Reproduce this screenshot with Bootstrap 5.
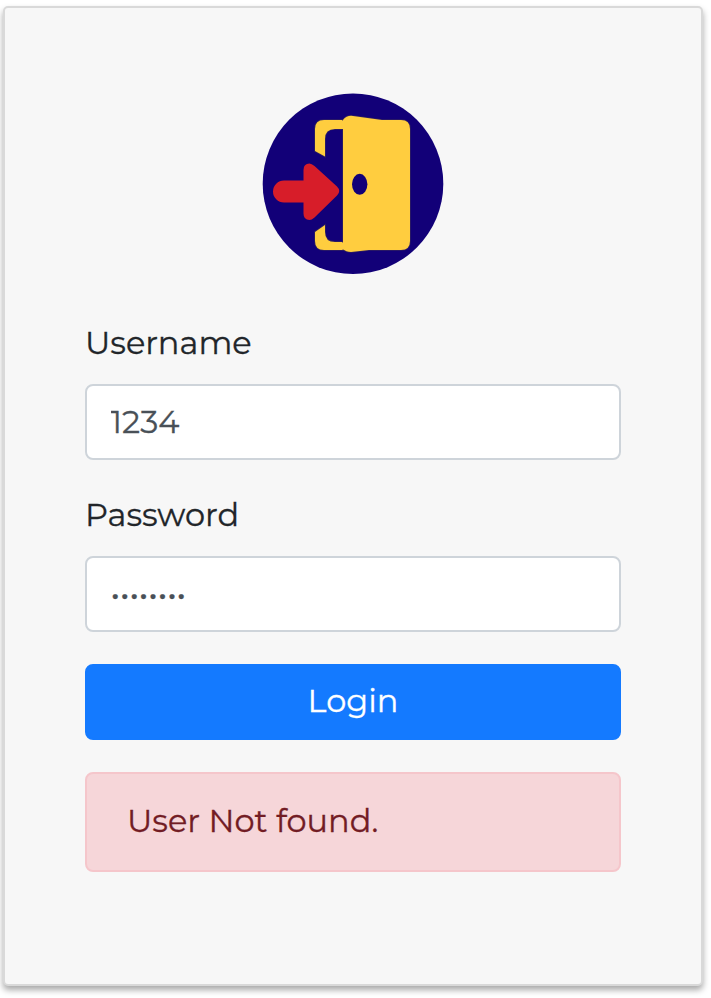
<!DOCTYPE html>
<html lang="en">
<head>
<meta charset="utf-8">
<meta name="viewport" content="width=device-width, initial-scale=1">
<title>Login</title>
<link href="https://cdn.jsdelivr.net/npm/bootstrap@5.3.0/dist/css/bootstrap.min.css" rel="stylesheet">
<style>
  body { font-family: Montserrat, Inter, sans-serif; font-size: 32px; line-height: 48px; color: #212529; background: #fff; height: 998px; padding: 6px 0 0 3px; overflow: hidden; -webkit-text-stroke: .3px currentColor; }
  .login-card { width: 700px; height: 980px; padding: 84px 80px 0; background: #f7f7f7; border: 2px solid #d9d9d9; border-radius: 5px; box-shadow: 0 4px 6px rgba(0,0,0,.34); }
  .logo { width: 184px; height: 184px; margin-bottom: 44px; }
  .form-label { margin-bottom: 16px; height: 48px; line-height: 46px; }
  .field { margin-bottom: 32px; }
  .form-control, .form-control:focus { height: 76px; padding: 11px 24px 13px 23.5px; font-size: 32px; line-height: 48px; color: #495057; border: 2px solid #ced4da; border-radius: 8px; background: #fff; -webkit-text-stroke: .3px currentColor; }
  .btn-login { height: 76px; padding: 11px 24px 13px; font-size: 32px; line-height: 48px; color: #fff; background: #147aff; border: 2px solid #147aff; border-radius: 8px; margin-bottom: 32px; -webkit-text-stroke: .3px currentColor; }
  .alert-login { height: 100px; padding: 23px 40px; color: #721c24; background: #f6d6d9; border: 2px solid #f5c6cb; border-radius: 8px; margin: 0; }
</style>
<script defer src="https://cdn.jsdelivr.net/npm/bootstrap@5.3.0/dist/js/bootstrap.bundle.min.js"></script>
</head>
<body>
<main class="login-card">
  <svg class="logo d-block mx-auto" viewBox="0 0 184 184" role="img" aria-label="Door with arrow">
    <circle cx="92" cy="91.7" r="90.3" fill="#120078"/>
    <g fill="#ffcd3f" stroke="#30205f" stroke-width="1.6" paint-order="stroke">
      <path d="M83 28H63q-9 0-9 9v22l10 5.500V47q0-10 10-10h9zM83 158H63q-9 0-9-9v-9l10-7v7q0 10 10 10h9z"/>
      <path d="M82 28q4-5 10-4l29 4h19q9 0 9 9v112q0 9-9 9h-32l-18 2q-5 0-8-3z"/>
    </g>
    <path d="M82 28.500V37M82 150.500V157.500" stroke="#ffcd3f" stroke-width="3"/>
    <ellipse cx="98.7" cy="92.3" rx="7.7" ry="10.5" fill="#120078"/>
    <path d="M23 88.500H42.500V78Q42.500 71.500 48.500 71.500Q50.500 71.500 53.500 74L76 94.500Q80.500 99 76 103.500L53.500 125.500Q50.500 128 48.500 128Q42.500 128 42.500 121.500V110.500H23A11 11 0 0 1 23 88.500Z" fill="#d71d29"/>
  </svg>
  <form>
    <div class="field">
      <label class="form-label d-block" for="username">Username</label>
      <input class="form-control" id="username" type="text" value="1234">
    </div>
    <div class="field">
      <label class="form-label d-block" for="password">Password</label>
      <input class="form-control" id="password" type="password" value="12345678">
    </div>
    <button class="btn btn-login d-block w-100" type="button">Login</button>
    <div class="alert alert-login" role="alert">User Not found.</div>
  </form>
</main>
</body>
</html>
